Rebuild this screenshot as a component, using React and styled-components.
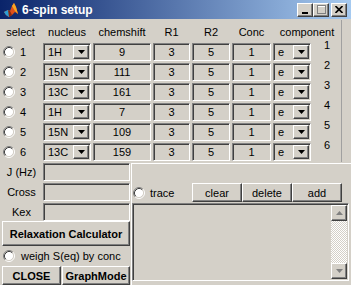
import React from 'react';
import styled, { createGlobalStyle, css } from 'styled-components';

const GlobalStyle = createGlobalStyle`
  html, body {
    margin: 0;
    padding: 0;
    background: #d4d0c8;
  }
  body {
    font-family: "Liberation Sans", Arial, sans-serif;
    font-size: 11px;
    color: #000;
  }
`;

const sunken = css`
  border: 1px solid;
  border-color: #808080 #fff #fff #808080;
  box-shadow: inset 1px 1px 0 #404040, inset -1px -1px 0 #d4d0c8;
`;

const raised = css`
  border: 1px solid;
  border-color: #fff #404040 #404040 #fff;
  box-shadow: inset -1px -1px 0 #808080, inset 1px 1px 0 #d4d0c8;
`;

const spins = [
    { nucleus: '1H', shift: 9 },
    { nucleus: '15N', shift: 111 },
    { nucleus: '13C', shift: 161 },
    { nucleus: '1H', shift: 7 },
    { nucleus: '15N', shift: 109 },
    { nucleus: '13C', shift: 159 },
];

function Radio() {
    return (
        <RadioMark width="12" height="12" viewBox="0 0 12 12">
            <circle cx="6" cy="6" r="4.5" fill="#fff" />
            <path d="M2.11 9.89 A5.5 5.5 0 0 1 9.89 2.11" stroke="#808080" fill="none" />
            <path d="M9.89 2.11 A5.5 5.5 0 0 1 2.11 9.89" stroke="#fff" fill="none" />
            <path d="M2.82 9.18 A4.5 4.5 0 0 1 9.18 2.82" stroke="#404040" fill="none" />
            <path d="M9.18 2.82 A4.5 4.5 0 0 1 2.82 9.18" stroke="#d4d0c8" fill="none" />
        </RadioMark>
    );
}

function Popup({ value }) {
    return (
        <PopupBox>
            <PopupText>{value}</PopupText>
            <ArrowButton>
                <svg width="7" height="4" viewBox="0 0 7 4">
                    <path d="M0 0h7L3.5 4z" fill="#000" />
                </svg>
            </ArrowButton>
        </PopupBox>
    );
}

function MatlabIcon() {
    return (
        <svg width="16" height="16" viewBox="0 0 16 16">
            <path d="M1 10 L5 8 L7 9 L9 4 L11 1 L13 5 L15 12 L12 10 L9 13 L6 15 L3 13 Z" fill="#e0501a" />
            <path d="M9 4 L11 1 L13 5 L15 12 L12 9 Z" fill="#f5a623" />
            <path d="M1 10 L5 8 L7 9 L6 15 L3 13 Z" fill="#2a9fd6" />
            <path d="M5 8 L7 9 L9 13 L6 15 Z" fill="#8a2a10" />
        </svg>
    );
}

export default function App() {
    return (
        <>
            <GlobalStyle />
            <Window>
                <TitleBar>
                    <MatlabIcon />
                    <Title>6-spin setup</Title>
                    <Controls>
                        <CapButton>
                            <MinGlyph />
                        </CapButton>
                        <CapButton>
                            <MaxGlyph />
                        </CapButton>
                        <CloseButton>
                            <svg width="8" height="7" viewBox="0 0 8 7">
                                <path d="M0.5 0 L7.5 7 M7.5 0 L0.5 7" stroke="#000" strokeWidth="1.6" />
                            </svg>
                        </CloseButton>
                    </Controls>
                </TitleBar>

                <Body>
                    <SpinTable>
                        <HeadCell>select</HeadCell>
                        <HeadCell>nucleus</HeadCell>
                        <HeadCell>chemshift</HeadCell>
                        <HeadCell>R1</HeadCell>
                        <HeadCell>R2</HeadCell>
                        <HeadCell>Conc</HeadCell>
                        <HeadCell $span={2}>component</HeadCell>

                        {spins.map((s, i) => (
                            <React.Fragment key={i}>
                                <SelectCell>
                                    <Radio />
                                    <span>{i + 1}</span>
                                </SelectCell>
                                <Popup value={s.nucleus} />
                                <Edit>{s.shift}</Edit>
                                <Edit>3</Edit>
                                <Edit>5</Edit>
                                <Edit>1</Edit>
                                <Popup value="e" />
                                <CompNumber>{i + 1}</CompNumber>
                            </React.Fragment>
                        ))}
                    </SpinTable>

                    <Lower>
                        <LeftCol>
                            <ParamGrid>
                                <ParamLabel>J (Hz)</ParamLabel>
                                <Edit />
                                <ParamLabel>Cross</ParamLabel>
                                <Edit />
                                <ParamLabel>Kex</ParamLabel>
                                <Edit />
                            </ParamGrid>
                            <BoldButton>Relaxation Calculator</BoldButton>
                            <RadioRow>
                                <Radio />
                                <span>weigh S(eq) by conc</span>
                            </RadioRow>
                            <ButtonPair>
                                <BoldButton $w={59}>CLOSE</BoldButton>
                                <BoldButton $w={68}>GraphMode</BoldButton>
                            </ButtonPair>
                        </LeftCol>

                        <TracePanel>
                            <TraceBar>
                                <TraceToggle>
                                    <Radio />
                                    <span>trace</span>
                                </TraceToggle>
                                <Button>clear</Button>
                                <Button>delete</Button>
                                <Button>add</Button>
                            </TraceBar>
                            <ListBox>
                                <ScrollBar>
                                    <ScrollButton>
                                        <svg width="7" height="4" viewBox="0 0 7 4">
                                            <path d="M3.5 0L7 4H0z" fill="#808080" />
                                        </svg>
                                    </ScrollButton>
                                    <ScrollTrack />
                                    <ScrollButton>
                                        <svg width="7" height="4" viewBox="0 0 7 4">
                                            <path d="M0 0h7L3.5 4z" fill="#808080" />
                                        </svg>
                                    </ScrollButton>
                                </ScrollBar>
                            </ListBox>
                        </TracePanel>
                    </Lower>
                </Body>
            </Window>
        </>
    );
}

const Window = styled.div`
    width: 351px;
    height: 285px;
    display: flex;
    flex-direction: column;
    background: #d4d0c8;
    overflow: hidden;
`;

const TitleBar = styled.div`
    height: 19px;
    display: flex;
    align-items: center;
    padding: 0 4px 0 3px;
    gap: 3px;
    background: linear-gradient(to right, #0a246a, #a6caf0);
    border-bottom: 1px solid #d4d0c8;
`;

const Title = styled.div`
    flex: 1;
    color: #fff;
    font-weight: bold;
    font-size: 12px;
`;

const Controls = styled.div`
    display: flex;
    align-items: center;
`;

const CapButton = styled.div`
    ${raised};
    width: 14px;
    height: 12px;
    background: #d4d0c8;
    display: flex;
    align-items: center;
    justify-content: center;
`;

const CloseButton = styled(CapButton)`
    margin-left: 2px;
`;

const MinGlyph = styled.div`
    width: 6px;
    height: 2px;
    background: #000;
    margin-top: 6px;
`;

const MaxGlyph = styled.div`
    width: 7px;
    height: 6px;
    border: 1px solid #fff;
    border-top-width: 2px;
    outline: 1px solid #808080;
    outline-offset: -1px;
`;

const Body = styled.div`
    flex: 1;
    display: flex;
    flex-direction: column;
`;

const SpinTable = styled.div`
    width: 341px;
    display: grid;
    grid-template-columns: 41px 48px 58px 37px 38px 39px 38px 1fr;
    grid-template-rows: 21px repeat(6, 18px);
    column-gap: 2px;
    row-gap: 2px;
    border-right: 1px solid #a0a0a0;
    padding-bottom: 1px;
`;

const HeadCell = styled.div`
    grid-column: span ${(p) => p.$span || 1};
    display: flex;
    align-items: center;
    justify-content: center;
    padding-top: 2px;
    white-space: nowrap;
`;

const SelectCell = styled.div`
    display: flex;
    align-items: center;
    gap: 5px;
    padding-left: 3px;
`;

const RadioMark = styled.svg`
    flex: none;
    display: block;
`;

const Edit = styled.div`
    ${sunken};
    background: #d4d0c8;
    display: flex;
    align-items: center;
    justify-content: center;
    box-sizing: border-box;
`;

const PopupBox = styled.div`
    ${sunken};
    box-sizing: border-box;
    background: #d4d0c8;
    display: flex;
    align-items: center;
    padding: 1px;
`;

const PopupText = styled.div`
    flex: 1;
    padding-left: 3px;
`;

const ArrowButton = styled.div`
    ${raised};
    box-sizing: border-box;
    width: 16px;
    height: 14px;
    background: #d4d0c8;
    display: flex;
    align-items: center;
    justify-content: center;
`;

const CompNumber = styled.div`
    margin-top: -4px;
    padding-left: 11px;
`;

const Lower = styled.div`
    flex: 1;
    display: flex;
    margin-top: 1px;
`;

const LeftCol = styled.div`
    width: 130px;
    display: flex;
    flex-direction: column;
`;

const ParamGrid = styled.div`
    display: grid;
    grid-template-columns: 43px 87px;
    grid-template-rows: repeat(3, 18px);
    row-gap: 2px;
`;

const ParamLabel = styled.div`
    display: flex;
    align-items: center;
    justify-content: center;
`;

const Button = styled.div`
    ${raised};
    box-sizing: border-box;
    background: #d4d0c8;
    display: flex;
    align-items: center;
    justify-content: center;
    height: 19px;
    width: 50px;
`;

const BoldButton = styled(Button)`
    width: ${(p) => (p.$w ? `${p.$w}px` : 'auto')};
    flex: ${(p) => (p.$w ? 'none' : 1)};
    font-weight: bold;
    font-size: 11px;
    margin-left: 2px;
    white-space: nowrap;
`;

const RadioRow = styled.div`
    height: 20px;
    display: flex;
    align-items: center;
    gap: 6px;
    padding-left: 3px;
`;

const ButtonPair = styled.div`
    display: flex;

    & > div + div {
        margin-left: 1px;
    }
`;

const TracePanel = styled.div`
    flex: 1;
    margin-left: 1px;
    border-left: 1px solid #fff;
    border-top: 1px solid #fff;
    display: flex;
    flex-direction: column;
`;

const TraceBar = styled.div`
    display: flex;
    align-items: center;
    padding-top: 19px;
    height: 19px;
`;

const TraceToggle = styled.div`
    width: 59px;
    display: flex;
    align-items: center;
    gap: 5px;
    padding-left: 1px;
`;

const ListBox = styled.div`
    ${sunken};
    margin-top: 1px;
    height: 74px;
    width: 213px;
    background: #d4d0c8;
    display: flex;
    justify-content: flex-end;
    padding: 1px;
`;

const ScrollBar = styled.div`
    width: 16px;
    display: flex;
    flex-direction: column;
`;

const ScrollButton = styled.div`
    ${raised};
    box-sizing: border-box;
    height: 16px;
    background: #d4d0c8;
    display: flex;
    align-items: center;
    justify-content: center;
`;

const ScrollTrack = styled.div`
    flex: 1;
    background-color: #d4d0c8;
    background-image: conic-gradient(#fff 25%, #d4d0c8 0 50%, #fff 0 75%, #d4d0c8 0);
    background-size: 2px 2px;
`;
